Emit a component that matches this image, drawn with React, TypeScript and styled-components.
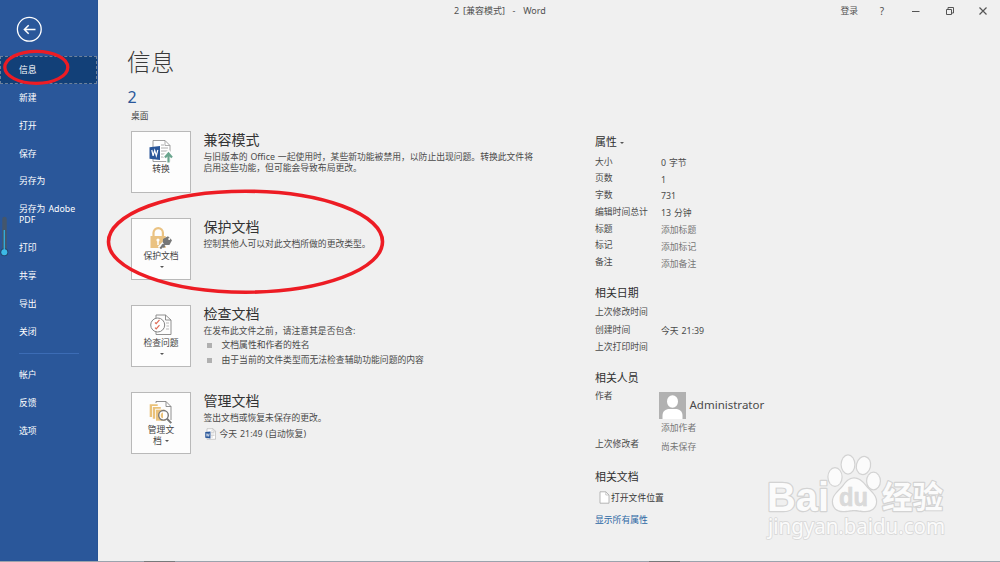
import React from "react";
import styled, { createGlobalStyle } from "styled-components";

const Global = createGlobalStyle`
  html, body { margin: 0; padding: 0; }
  body {
    width: 1000px; height: 562px; overflow: hidden; background: #f0f0f0;
    font-family: "Noto Sans", "Noto Sans CJK SC", sans-serif;
    font-size: 8.8px; color: #4a4a4a; word-spacing: 0.7px;
  }
`;

const Shell = styled.div`
  position: relative;
  display: flex;
  flex-direction: column;
  width: 1000px;
  height: 562px;
  overflow: hidden;
  background: #f0f0f0;
`;
const Body = styled.div`
  display: flex;
  height: 560.5px;
  flex: none;
`;
const Taskbar = styled.div`
  display: flex;
  flex: 1;
  background: #9ba3ad;
`;
const TaskMark = styled.i<{ $offset: number }>`
  width: 31px;
  height: 2px;
  margin-left: ${(p) => p.$offset}px;
  background: #77797b;
`;

const Sidebar = styled.nav`
  width: 98px;
  flex: none;
  box-sizing: border-box;
  background: #2a579a;
  border-right: 1px solid #2450908c;
  display: flex;
  flex-direction: column;
`;
const BackButton = styled.div`
  height: 56px;
  padding: 16px 0 0 16px;
  box-sizing: border-box;
  svg { display: block; }
`;
const NavItem = styled.div<{ $active?: boolean; $tall?: boolean }>`
  height: ${(p) => (p.$tall ? 39 : 27.8)}px;
  flex: none;
  box-sizing: border-box;
  padding-top: 1.6px;
  padding-left: ${(p) => (p.$active ? 18 : 19)}px;
  display: flex;
  align-items: center;
  line-height: 11px;
  color: #fff;
  white-space: pre;
  background: ${(p) => (p.$active ? "#124078" : "transparent")};
  border: ${(p) => (p.$active ? "1px dashed #6d819b" : "0")};
`;
const NavDivider = styled.hr`
  width: 60px;
  height: 1px;
  flex: none;
  margin: 8px 0 7px 19px;
  border: 0;
  background: #3c6cb5;
`;

const Main = styled.main`
  flex: 1;
  display: flex;
  flex-direction: column;
`;
const TitleBar = styled.header`
  height: 22px;
  flex: none;
  display: flex;
  align-items: center;
  justify-content: space-between;
  padding: 0 12px 0 356px;
  line-height: 12px;
  color: #505050;
`;
const DocTitle = styled.span`
  font-size: 9px;
  white-space: pre;
  word-spacing: 1.5px;
`;
const WindowTools = styled.div`
  display: flex;
  align-items: center;
  svg { display: block; }
`;
const Help = styled.span`
  width: 10px;
  margin: 0 25px 0 19px;
  text-align: center;
  font-size: 10px;
`;
const Columns = styled.div`
  display: flex;
  flex: 1;
`;
const InfoColumn = styled.section`
  width: 464px;
  box-sizing: border-box;
  padding: 22px 0 0 30px;
`;
const PageTitle = styled.h1`
  margin: 0 0 0 -1px;
  height: 38px;
  line-height: 37px;
  font-size: 23.7px;
  font-weight: 300;
  color: #3a3a3a;
`;
const FileName = styled.div`
  height: 27px;
  line-height: 31px;
  margin-left: -0.5px;
  font-size: 16px;
  color: #2a579a;
`;
const FilePath = styled.div`
  height: 22px;
  line-height: 14px;
  padding-left: 3px;
`;
const Action = styled.article`
  display: flex;
  height: 87px;
  padding-left: 3px;
`;
const Tile = styled.div`
  width: 60px;
  height: 62px;
  box-sizing: border-box;
  border: 1px solid #b9b9b9;
  background: #fdfdfd;
  display: flex;
  flex-direction: column;
  align-items: center;
  padding-top: 7px;
  flex: none;
  line-height: 11px;
  color: #444;
  svg { display: block; flex: none; }
`;
const TileLabel = styled.div`
  margin-top: 0.8px;
  text-align: center;
  white-space: pre;
`;
const Caret = styled.i<{ $inline?: boolean }>`
  display: ${(p) => (p.$inline ? "inline-block" : "block")};
  border: 2px solid transparent;
  border-top-color: #555;
  border-bottom: 0;
  margin: ${(p) => (p.$inline ? "0 0 2px 3px" : "4px 0 0 2px")};
`;
const ActionText = styled.div`
  padding-left: 12.5px;
  white-space: pre;
  line-height: 11px;
`;
const ActionTitle = styled.h2`
  margin: 0;
  height: 21.4px;
  line-height: 18px;
  font-size: 14px;
  font-weight: 400;
  color: #333;
`;
const Bullet = styled.div`
  display: flex;
  align-items: center;
  height: 14.7px;
  gap: 10px;
  padding-left: 3px;
  position: relative;
  top: 1px;
  &::before { content: ""; width: 5px; height: 5px; background: #b0b0b0; }
`;
const Version = styled.div`
  display: flex;
  align-items: center;
  height: 15px;
  margin-top: 2.4px;
  gap: 3px;
  padding-left: 1px;
`;

const Properties = styled.aside`
  width: 250px;
  padding: 110px 0 0 33px;
  white-space: pre;
`;
const GroupTitle = styled.h3<{ $height: number; $lead?: number }>`
  margin: 0;
  box-sizing: border-box;
  height: ${(p) => p.$height}px;
  padding-top: ${(p) => p.$lead ?? 0}px;
  line-height: 20px;
  font-size: 10.9px;
  font-weight: 400;
  color: #2e2e2e;
`;
const Row = styled.div<{ $height: number }>`
  display: grid;
  grid-template-columns: 66px 1fr;
  height: ${(p) => p.$height}px;
  line-height: 16px;
`;
const Value = styled.span<{ $hint?: boolean; $drop?: number }>`
  padding-top: ${(p) => p.$drop ?? 1.3}px;
  color: ${(p) => (p.$hint ? "#767676" : "#4a4a4a")};
`;
const Person = styled.div`
  display: flex;
  align-items: center;
  gap: 3.5px;
  height: 27px;
  margin: 3.7px 0 1.5px -2px;
  font-size: 11.5px;
  svg { display: block; }
`;
const FileLocation = styled.div`
  display: flex;
  align-items: center;
  height: 16px;
  gap: 1.5px;
  padding-left: 3.5px;
  color: #383838;
`;
const AllProps = styled.a`
  display: block;
  margin-top: 6px;
  line-height: 16px;
  color: #2c67a4;
`;

const Overlay = styled.svg`
  position: absolute;
  left: 0;
  top: 0;
  pointer-events: none;
`;

const WordBadge = ({ size = 1 }: { size?: number }) => (
  <svg width={24 * size} height={24 * size} viewBox="0 0 24 24">
    <path d="M4 1.5h12l5 5v16H4z" fill="#fff" stroke="#888" strokeWidth=".8" />
    <path d="M16 1.5v5h5M12 6h3M12 9h7M12 12h7M12 15h7M12 18h4" fill="none" stroke="#999" strokeWidth=".8" />
    <path d="M.5 8.2 11 7v14L.5 19.7z" fill="#2a579a" />
    <path d="m2.8 11 1.3 5.8 1.6-5.5 1.6 5.5L8.8 11" fill="none" stroke="#fff" strokeWidth="1.2" />
    {size === 1 && (
      <g fill="none">
        <path d="M19.5 24v-9M15 18.500l4.500-5 4.500 5" stroke="#fdfdfd" strokeWidth="4.500" />
        <path d="M19.5 23.500v-8M16 18.500l3.500-4 3.500 4" stroke="#6aa58e" strokeWidth="2.200" />
      </g>
    )}
  </svg>
);
const LockIcon = () => (
  <svg width="24" height="24" viewBox="0 0 24 24">
    <path d="M4.5 11V6.8a4.7 4.7 0 0 1 9.4 0V11" fill="none" stroke="#eac282" strokeWidth="2.2" />
    <rect x="1.5" y="10" width="15.2" height="12" fill="#eac282" />
    <circle cx="9" cy="14" r="1.6" fill="#fff" />
    <path d="M9 14v5" stroke="#fff" strokeWidth="1.5" />
    <path d="M10.5 22.5 18 15" stroke="#fdfdfd" strokeWidth="5" />
    <path d="m14 13 5-2.8 4 4-2.6 4.8-4 .1-2.6-2.6z" fill="#777" />
    <path d="M11.2 22.5 18 15.7M13 18.5l2.5 2.8" stroke="#777" strokeWidth="2.2" />
    <circle cx="20.2" cy="13" r="1" fill="#fff" />
  </svg>
);
const InspectIcon = () => (
  <svg width="24" height="24" viewBox="0 0 24 24" fill="none" stroke="#858585">
    <path d="M7 5V2h9.5L22 7v14.5H7V18M16.5 2v5H22" strokeWidth=".9" />
    <path d="M17 10h3M17.5 13h2.5M17 16h3" stroke="#aaa" strokeWidth=".8" />
    <circle cx="8.7" cy="12" r="7" fill="#fff" strokeWidth="1" />
    <path d="m6 9.5 1.2 1.2 3.3-3.8M6 14.7l1.2 1.2 3.3-3.8" stroke="#e06b55" strokeWidth="1.2" />
  </svg>
);
const ManageIcon = () => (
  <svg width="24" height="24" viewBox="0 0 24 24">
    <path d="M7 3V1.5h10L22 6.5V20M17 1.5v5h5" fill="none" stroke="#858585" strokeWidth=".9" />
    <path d="M.7 4.3h8v1.8H3v11H.7z" fill="#eac27a" />
    <path d="M3.8 7h8v1.8H6.2v10H3.8z" fill="#eac27a" />
    <path d="M7 9.7h9v11H7z" fill="#eac27a" />
    <circle cx="14.5" cy="15.3" r="4.8" fill="#fff" stroke="#777" strokeWidth="1.4" />
    <path d="M14 12.5v5.8c-3 0-3-5.8 0-5.8" fill="#eac27a" />
    <path d="m18 18.8 4.3 4.3" stroke="#777" strokeWidth="2" />
  </svg>
);
const PageIcon = () => (
  <svg width="11" height="13" viewBox="0 0 11 13">
    <path d="M1 .8h5.8L10 4v8.2H1z" fill="#fff" stroke="#a5a5a5" strokeWidth=".8" />
    <path d="M6.8.8V4H10" fill="none" stroke="#b5b5b5" strokeWidth=".7" />
  </svg>
);

const topNav = ["信息", "新建", "打开", "保存", "另存为", "另存为 Adobe\nPDF", "打印", "共享", "导出", "关闭"];
const accountNav = ["帐户", "反馈", "选项"];
const facts = [
  ["大小", "0 字节"],
  ["页数", "1"],
  ["字数", "731"],
  ["编辑时间总计", "13 分钟"],
  ["标题", "添加标题"],
  ["标记", "添加标记"],
  ["备注", "添加备注"],
];

const Watermark = () => (
  <g fill="#fbfbfb" stroke="#d3d3d3" strokeWidth="2.4" paintOrder="stroke" strokeLinejoin="round">
    <text x="767" y="510.5" fontFamily="Liberation Sans" fontWeight="700" fontSize="40" textLength="62" lengthAdjust="spacingAndGlyphs">Bai</text>
    <ellipse cx="835" cy="477" rx="6.5" ry="8.7" />
    <ellipse cx="848" cy="464.5" rx="6.3" ry="9" />
    <ellipse cx="863.5" cy="465.5" rx="6.5" ry="8.5" transform="rotate(12 863.5 465.5)" />
    <ellipse cx="873.5" cy="481" rx="6.3" ry="8.3" />
    <path d="M854 478.5c-5 0-8 4-11 8-3 4-10 8-10 15 0 6 4 9.500 10 9.500 5 0 7-1 11-1s6 1 11 1c6 0 11-3 11-9.500 0-7-7-11-10-15-3-4-7-8-12-8z" />
    <text x="839" y="506" fontFamily="Liberation Sans" fontWeight="700" fontSize="25" fill="#dadada" stroke="#cfcfcf" strokeWidth=".5" textLength="29" lengthAdjust="spacingAndGlyphs">du</text>
    <text x="882" y="507.5" fontFamily="Noto Sans CJK SC" fontWeight="700" fontSize="31" textLength="61" lengthAdjust="spacingAndGlyphs">经验</text>
    <text x="768" y="534" fontFamily="Noto Sans" fontSize="21" textLength="177" lengthAdjust="spacingAndGlyphs" stroke="#dadada" strokeWidth="1.8">jingyan.baidu.com</text>
  </g>
);

export default function App() {
  return (
    <Shell>
      <Global />
      <Body>
        <Sidebar>
          <BackButton>
            <svg width="27" height="27" viewBox="0 0 27 27" fill="none" stroke="#fff">
              <circle cx="13.3" cy="13.3" r="11.9" strokeWidth="1.3" />
              <path d="M19.500 13.500H8.500M12.700 9.300l-4.300 4.200 4.300 4.200" strokeWidth="1.500" />
            </svg>
          </BackButton>
          {topNav.map((t, i) => (
            <NavItem key={t} $active={i === 0} $tall={i === 5}>{t}</NavItem>
          ))}
          <NavDivider />
          {accountNav.map((t) => <NavItem key={t}>{t}</NavItem>)}
        </Sidebar>
        <Main>
          <TitleBar>
            <DocTitle>2 [兼容模式]  -  Word</DocTitle>
            <WindowTools>
              <span>登录</span>
              <Help>?</Help>
              <svg width="76" height="10" viewBox="0 0 76 10" fill="none" stroke="#555">
                <path d="M0 5.500h7.500" />
                <path d="M34.500 3.500h5v5h-5zM36 3.500v-2h5.500v5.500h-2" />
                <path d="m67.500 1.500 7 7m0-7-7 7" strokeWidth="1.200" />
              </svg>
            </WindowTools>
          </TitleBar>
          <Columns>
            <InfoColumn>
              <PageTitle>信息</PageTitle>
              <FileName>2</FileName>
              <FilePath>桌面</FilePath>
              <Action>
                <Tile><WordBadge /><TileLabel>转换</TileLabel></Tile>
                <ActionText>
                  <ActionTitle>兼容模式</ActionTitle>
                  {"与旧版本的 Office 一起使用时，某些新功能被禁用，以防止出现问题。转换此文件将\n启用这些功能，但可能会导致布局更改。"}
                </ActionText>
              </Action>
              <Action>
                <Tile><LockIcon /><TileLabel>保护文档</TileLabel><Caret /></Tile>
                <ActionText>
                  <ActionTitle>保护文档</ActionTitle>
                  控制其他人可以对此文档所做的更改类型。
                </ActionText>
              </Action>
              <Action>
                <Tile><InspectIcon /><TileLabel>检查问题</TileLabel><Caret /></Tile>
                <ActionText>
                  <ActionTitle>检查文档</ActionTitle>
                  在发布此文件之前，请注意其是否包含:
                  <Bullet>文档属性和作者的姓名</Bullet>
                  <Bullet>由于当前的文件类型而无法检查辅助功能问题的内容</Bullet>
                </ActionText>
              </Action>
              <Action>
                <Tile><ManageIcon /><TileLabel>{"管理文\n档"}<Caret $inline /></TileLabel></Tile>
                <ActionText>
                  <ActionTitle>管理文档</ActionTitle>
                  签出文档或恢复未保存的更改。
                  <Version><WordBadge size={0.5} />今天 21:49 (自动恢复)</Version>
                </ActionText>
              </Action>
            </InfoColumn>
            <Properties>
              <GroupTitle $height={21.5}>属性<Caret $inline /></GroupTitle>
              {facts.map(([label, value], i) => (
                <Row key={label} $height={16.8}>
                  <span>{label}</span><Value $hint={i > 3}>{value}</Value>
                </Row>
              ))}
              <GroupTitle $height={33} $lead={12}>相关日期</GroupTitle>
              <Row $height={17.7}><span>上次修改时间</span></Row>
              <Row $height={17.7}><span>创建时间</span><Value>今天 21:39</Value></Row>
              <Row $height={17.7}><span>上次打印时间</span></Row>
              <GroupTitle $height={31} $lead={10.7}>相关人员</GroupTitle>
              <Row $height={48.2}>
                <span>作者</span>
                <div>
                  <Person>
                    <svg width="27" height="27" viewBox="0 0 27 27">
                      <path fill="#b1b1b1" d="M0 0h27v27H0z" />
                      <ellipse cx="13.500" cy="9.500" rx="5.500" ry="6.200" fill="#fff" />
                      <path d="M3.500 27v-3c0-5 3-7 7-7h6c4 0 7 2 7 7v3z" fill="#fff" />
                    </svg>
                    Administrator
                  </Person>
                  <Value $hint>添加作者</Value>
                </div>
              </Row>
              <Row $height={22}><span>上次修改者</span><Value $hint $drop={3}>尚未保存</Value></Row>
              <GroupTitle $height={31.5} $lead={8.5}>相关文档</GroupTitle>
              <FileLocation><PageIcon />打开文件位置</FileLocation>
              <AllProps>显示所有属性</AllProps>
            </Properties>
          </Columns>
        </Main>
      </Body>
      <Taskbar><TaskMark $offset={144} /><TaskMark $offset={474} /></Taskbar>
      <Overlay width="1000" height="562" viewBox="0 0 1000 562">
        <path d="M4.500 219v30" stroke="#44566c" strokeWidth="4.500" strokeLinecap="round" />
        <circle cx="4.300" cy="252.300" r="4" fill="#24466f" />
        <path d="M4.300 230v20" stroke="#2fb2e2" strokeWidth="1.300" />
        <circle cx="4.300" cy="252.300" r="3" fill="#3cb9e6" />
        <g fill="none" stroke="#ed1c24">
          <ellipse cx="36.300" cy="67.300" rx="31.500" ry="16" strokeWidth="3.300" />
          <ellipse cx="245.500" cy="241.700" rx="137" ry="50.500" strokeWidth="3.600" />
        </g>
        <Watermark />
      </Overlay>
    </Shell>
  );
}
